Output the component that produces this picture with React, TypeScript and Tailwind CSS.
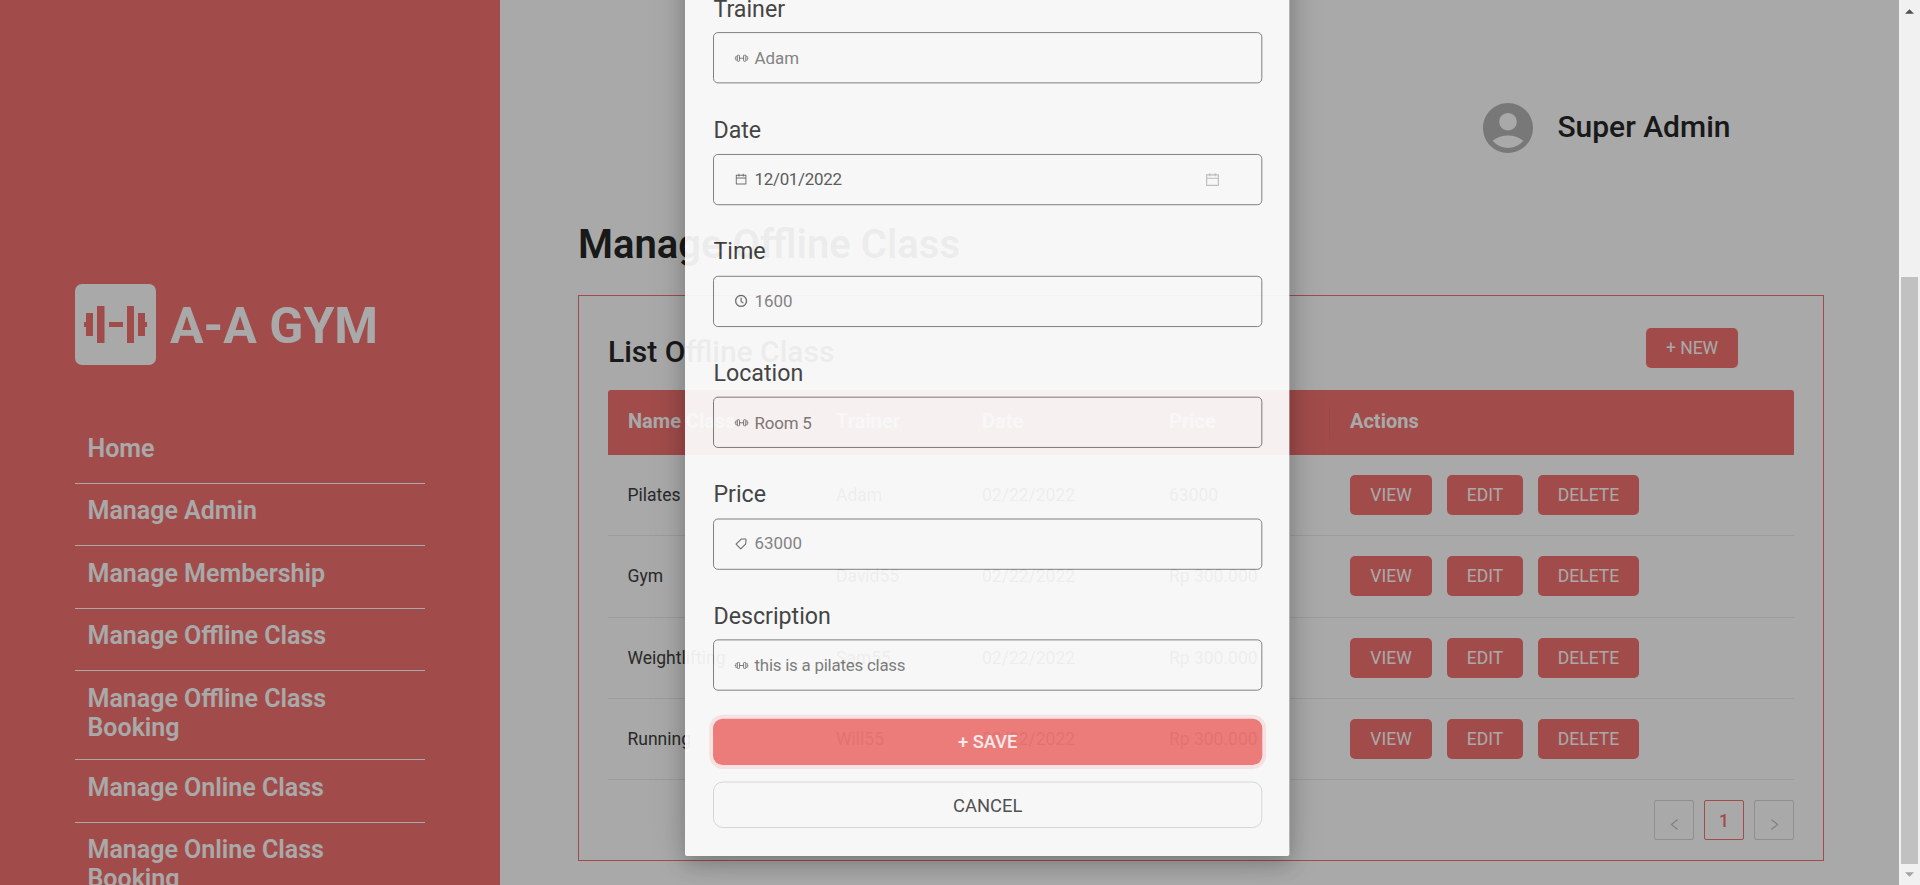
import React from "react";
import { MdAccountCircle } from "react-icons/md";
import { AiOutlineCalendar, AiOutlineClockCircle, AiOutlineLeft, AiOutlineRight } from "react-icons/ai";

const navItems = [
  { label: "Home", size: "h-[62px] pt-[12px]" },
  { label: "Manage Admin", size: "h-[62px] pt-[12px]" },
  { label: "Manage Membership", size: "h-[63px] pt-[13px]" },
  { label: "Manage Offline Class", size: "h-[62px] pt-[12px]" },
  { label: "Manage Offline Class Booking", size: "h-[89px] pt-[13px]" },
  { label: "Manage Online Class", size: "h-[63px] pt-[13px]" },
  { label: "Manage Online Class Booking", size: "h-[89px] pt-[12px]" },
];

const rows = [
  { name: "Pilates", trainer: "Adam", date: "02/22/2022", price: "63000" },
  { name: "Gym", trainer: "David55", date: "02/22/2022", price: "Rp 300.000" },
  { name: "Weightlifting", trainer: "Sam55", date: "02/22/2022", price: "Rp 300.000" },
  { name: "Running", trainer: "Will55", date: "02/22/2022", price: "Rp 300.000" },
];

const columns = "grid grid-cols-[208px_146px_187px_181px_1fr]";

function LogoMark() {
  return (
    <svg viewBox="0 0 81 81" className="size-[81px] shrink-0">
      <rect width="81" height="81" rx="7" fill="#fff" />
      <g fill="#f37371">
        <rect x="9" y="38" width="4" height="5" />
        <rect x="11" y="29" width="7" height="23" />
        <rect x="22" y="22" width="7.5" height="37" />
        <rect x="34" y="38" width="14" height="5" />
        <rect x="52" y="22" width="7" height="37" />
        <rect x="63" y="29" width="7" height="23" />
        <rect x="68" y="38" width="4" height="5" />
      </g>
    </svg>
  );
}

function DumbbellIcon() {
  return (
    <svg viewBox="0 0 15 8" className="h-[8px] w-[15px]" fill="none" stroke="currentColor" strokeWidth=".9">
      <path d="M5.4 4h4.2M.3 4h1.2M13.5 4h1.2" />
      <rect x="3.1" y=".8" width="2.3" height="6.4" rx=".8" />
      <rect x="9.6" y=".8" width="2.3" height="6.4" rx=".8" />
      <path d="M3 2H1.5v4H3M12 2h1.5v4H12" strokeWidth=".7" />
    </svg>
  );
}

function TagIcon() {
  return (
    <svg viewBox="0 0 14 14" className="size-[14px]" fill="none" stroke="currentColor" strokeWidth="1.1">
      <path d="M7.2 2.2h4.4l.5.4-.3 4.6-5.2 5.2-4.8-4.8z" strokeLinejoin="round" />
    </svg>
  );
}

function Sidebar() {
  return (
    <aside className="w-[500px] shrink-0 bg-[#f37371] px-[75px] pt-[284px] text-white">
      <div className="flex items-center gap-[14px]">
        <LogoMark />
        <span className="mt-[2px] text-[50px] leading-none font-bold whitespace-nowrap">A-A GYM</span>
      </div>
      <nav className="mt-[57px]">
        {navItems.map((item) => (
          <div
            key={item.label}
            className={`${item.size} border-b border-white px-[12.5px] text-[25px] leading-[29px] font-semibold`}
          >
            <div className="w-[260px]">{item.label}</div>
          </div>
        ))}
      </nav>
    </aside>
  );
}

function RedButton({ label, width }: { label: string; width: string }) {
  return (
    <button className={`${width} h-10 rounded-[5px] bg-[#f37371] text-[17.5px] text-white whitespace-nowrap`}>
      {label}
    </button>
  );
}

function ClassTable() {
  return (
    <div>
      <div className={`${columns} h-[65px] items-center rounded-t-[3px] bg-[#f37371] text-[20px] font-bold text-white`}>
        {["Name Class", "Trainer", "Date", "Price"].map((title) => (
          <div key={title} className="flex h-8 items-center border-r border-black/5 pb-[3px] pl-[20px]">
            {title}
          </div>
        ))}
        <div className="pb-[3px] pl-5">Actions</div>
      </div>
      {rows.map((row) => (
        <div
          key={row.name}
          className={`${columns} h-[81.25px] items-center border-b border-[#ececec] text-[17.5px] text-[#404040]`}
        >
          <div className="pl-[19.5px]">{row.name}</div>
          <div className="pl-[20px]">{row.trainer}</div>
          <div className="pl-[20px]">{row.date}</div>
          <div className="pl-[20px]">{row.price}</div>
          <div className="flex gap-[15px] pl-5">
            <RedButton label="VIEW" width="w-[82px]" />
            <RedButton label="EDIT" width="w-[76px]" />
            <RedButton label="DELETE" width="w-[101px]" />
          </div>
        </div>
      ))}
    </div>
  );
}

function Pagination() {
  return (
    <div className="mt-5 flex justify-end gap-[10px]">
      <span className="flex size-10 items-center justify-center rounded-[2px] border border-[#d9d9d9] pt-2 text-[#bfbfbf]">
        <AiOutlineLeft className="size-[15px]" />
      </span>
      <span className="flex size-10 items-center justify-center rounded-[2px] border border-[#f37371] pt-[2px] text-[17.5px] font-medium text-[#f37371]">
        1
      </span>
      <span className="flex size-10 items-center justify-center rounded-[2px] border border-[#d9d9d9] pt-2 text-[#bfbfbf]">
        <AiOutlineRight className="size-[15px]" />
      </span>
    </div>
  );
}

function Content() {
  return (
    <main className="flex min-w-0 flex-1 flex-col bg-white pt-[98px] pr-[75px] pl-[78px]">
      <div className="flex h-[60px] items-center justify-end gap-[19px] pr-[93.5px]">
        <MdAccountCircle className="size-[60px] text-[#b5b5b5]" />
        <span className="mb-[2px] text-[30px] leading-none font-medium text-[#262626]">Super Admin</span>
      </div>
      <h1 className="mt-[63px] text-[40px] leading-[48px] font-semibold text-[#262626]">Manage Offline Class</h1>
      <section className="mt-[26px] h-[566px] border border-[#f37371] px-[29px] pt-8">
        <div className="flex h-[62px] items-start justify-between pr-[56px]">
          <h2 className="mt-[6px] text-[30px] leading-[35px] font-medium text-[#262626]">List Offline Class</h2>
          <RedButton label="+ NEW" width="w-[92px]" />
        </div>
        <ClassTable />
        <Pagination />
      </section>
    </main>
  );
}

type FieldProps = {
  label: string;
  value: string;
  icon: React.ReactNode;
  tone?: string;
  trailing?: React.ReactNode;
};

function Field({ label, value, icon, tone = "text-[#808080]", trailing }: FieldProps) {
  return (
    <div className="h-[125.6px] shrink-0">
      <div className="h-[38.6px] pt-px text-[24px] leading-[26px] text-[#3c3c3c]">{label}</div>
      <div className="flex h-[53px] items-center rounded-[5px] border border-[#777] px-5 text-[17.5px]">
        <span className="flex w-4 justify-center text-[#666]">{icon}</span>
        <span className={`${tone} ml-[5.500px]`}>{value}</span>
        {trailing}
      </div>
    </div>
  );
}

function Modal() {
  return (
    <div className="absolute bottom-[28.8px] left-[685.3px] flex h-[1000px] w-[625px] origin-bottom-left scale-[0.967] flex-col justify-end rounded-[2px] bg-white pr-[28.4px] pb-[28.7px] pl-[29.4px] opacity-[0.916] shadow-[0_8px_20px_rgba(0,0,0,0.22),0_2px_40px_rgba(0,0,0,0.14)]">
      <Field label="Trainer" value="Adam" icon={<DumbbellIcon />} />
      <Field
        label="Date"
        value="12/01/2022"
        tone="text-[#555] tracking-[-0.3px]"
        icon={<AiOutlineCalendar className="size-[14px]" />}
        trailing={<AiOutlineCalendar className="mr-[22px] ml-auto size-[17px] text-[#bfbfbf]" />}
      />
      <Field
        label="Time"
        value="1600"
        icon={<AiOutlineClockCircle className="size-[14px] stroke-[#666] stroke-[24px]" />}
      />
      <Field label="Location" value="Room 5" tone="text-[#7a7a7a] tracking-[-0.2px]" icon={<DumbbellIcon />} />
      <Field label="Price" value="63000" icon={<TagIcon />} />
      <Field
        label="Description"
        value="this is a pilates class"
        tone="text-[#7a7a7a] tracking-[-0.25px]"
        icon={<DumbbellIcon />}
      />
      <button className="-mt-[5.5px] h-12 shrink-0 rounded-[10px] bg-[#f27976] text-[19px] font-medium text-white/90 shadow-[0_0_0_4px_rgba(243,115,113,0.16)]">
        + SAVE
      </button>
      <button className="mt-[17.5px] h-12 shrink-0 rounded-[10px] border border-[#d9d9d9] pt-px text-[19px] text-[#4a4a4a]">
        CANCEL
      </button>
    </div>
  );
}

function Scrollbar() {
  return (
    <div className="flex w-[21px] shrink-0 flex-col items-center bg-[#f1f1f1]">
      <div className="flex h-[277px] w-full justify-center pt-[9px]">
        <svg viewBox="0 0 10 5" className="h-[5px] w-[9px]">
          <path d="M0 5 5 0l5 5z" fill="#505050" />
        </svg>
      </div>
      <div className="h-[587px] w-[17px] bg-[#c1c1c1]" />
      <div className="flex h-[21px] items-center">
        <svg viewBox="0 0 10 5" className="h-[5px] w-[9px]">
          <path d="M0 0 5 5l5-5z" fill="#a3a3a3" />
        </svg>
      </div>
    </div>
  );
}

export default function App() {
  return (
    <div className="flex h-[885px] w-[1920px] overflow-hidden font-['Roboto',sans-serif]">
      <div className="relative flex min-w-0 flex-1 overflow-hidden">
        <Sidebar />
        <Content />
        <div className="absolute inset-0 bg-black/[0.337]" />
        <Modal />
      </div>
      <Scrollbar />
    </div>
  );
}
